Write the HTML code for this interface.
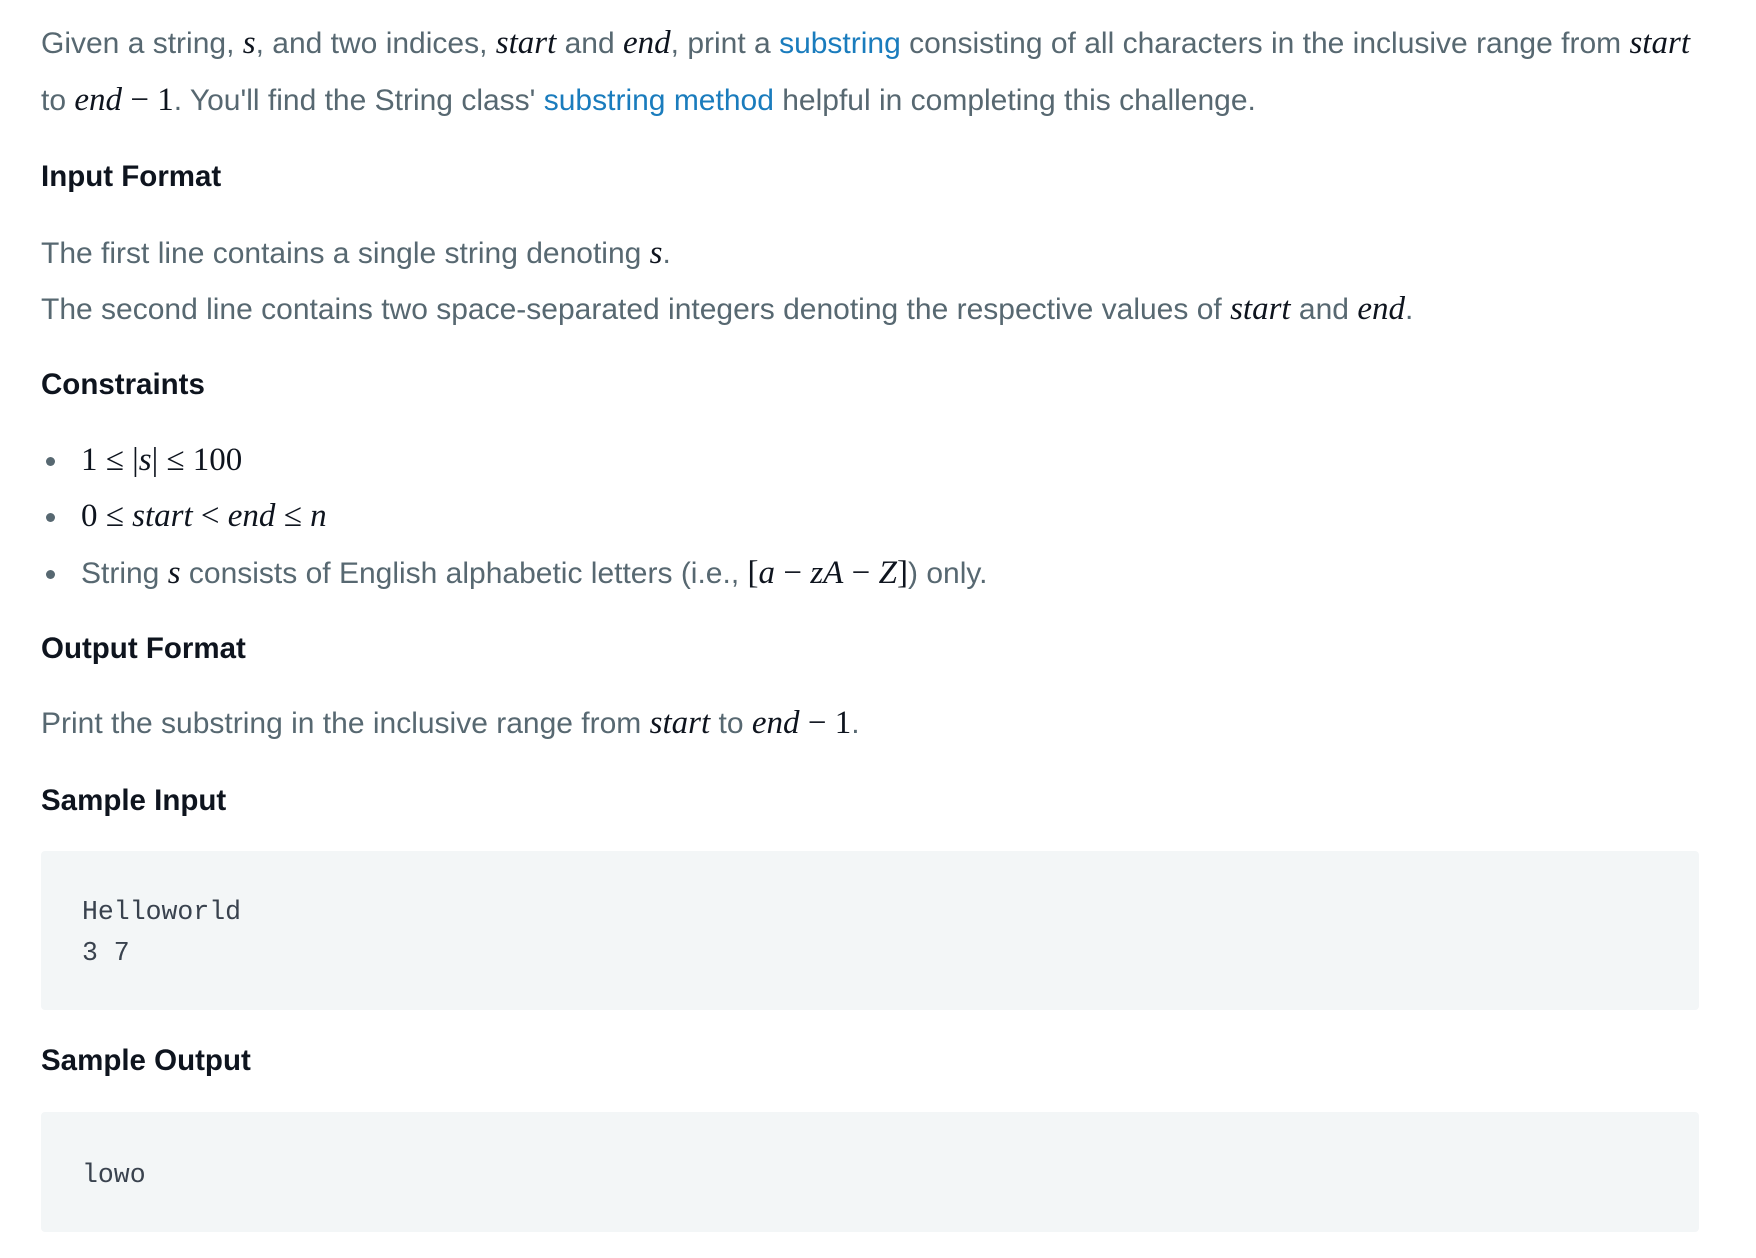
<!DOCTYPE html>
<html><head><meta charset="utf-8"><style>
body{margin:0;width:1756px;height:1258px;background:#fff;position:relative;overflow:hidden;font-family:"Liberation Sans",sans-serif;color:#576871;}
.l{position:absolute;left:41px;white-space:nowrap;font-size:30px;line-height:40px;}
.h{position:absolute;left:41px;font-weight:bold;color:#0e141e;font-size:29.5px;line-height:40px;white-space:nowrap;}
m{font-family:"Liberation Serif",serif;font-style:italic;font-size:33px;color:#0e141e;}
n{font-family:"Liberation Serif",serif;font-size:33px;color:#0e141e;}
a{color:#1a7cbd;text-decoration:none;}
.b{position:absolute;left:41px;width:1658px;background:#f3f6f7;border-radius:4px;}
.c{position:absolute;left:82px;font-family:"Liberation Mono",monospace;font-size:26.5px;color:#39424e;line-height:40px;}
.dot{position:absolute;left:46px;width:9px;height:9px;border-radius:50%;background:#576871;}
</style></head><body>
<div class="l" style="top:23px">Given a string, <m>s</m>, and two indices, <m>start</m> and <m>end</m>, print a <a>substring</a> consisting of all characters in the inclusive range from <m>start</m></div>
<div class="l" style="top:80px">to <m>end</m> <n>− 1</n>. You'll find the String class' <a>substring method</a> helpful in completing this challenge.</div>
<div class="h" style="top:157px">Input Format</div>
<div class="l" style="top:233px">The first line contains a single string denoting <m>s</m>.</div>
<div class="l" style="top:289px">The second line contains two space-separated integers denoting the respective values of <m>start</m> and <m>end</m>.</div>
<div class="h" style="top:365px">Constraints</div>
<div class="dot" style="top:457px"></div>
<div class="l" style="left:81px;top:440px"><n>1 ≤ |</n><m>s</m><n>| ≤ 100</n></div>
<div class="dot" style="top:513px"></div>
<div class="l" style="left:81px;top:496px"><n>0 ≤ </n><m>start</m><n> &lt; </n><m>end</m><n> ≤ </n><m>n</m></div>
<div class="dot" style="top:570px"></div>
<div class="l" style="left:81px;top:553px">String <m>s</m> consists of English alphabetic letters (i.e., <n>[</n><m>a</m> <n>−</n> <m>zA</m> <n>−</n> <m>Z</m><n>]</n>) only.</div>
<div class="h" style="top:629px">Output Format</div>
<div class="l" style="top:703px">Print the substring in the inclusive range from <m>start</m> to <m>end</m> <n>− 1</n>.</div>
<div class="h" style="top:781px">Sample Input</div>
<div class="b" style="top:851px;height:159px"></div>
<div class="c" style="top:892px">Helloworld</div>
<div class="c" style="top:933px">3 7</div>
<div class="h" style="top:1041px">Sample Output</div>
<div class="b" style="top:1112px;height:120px"></div>
<div class="c" style="top:1155px">lowo</div>
</body></html>
